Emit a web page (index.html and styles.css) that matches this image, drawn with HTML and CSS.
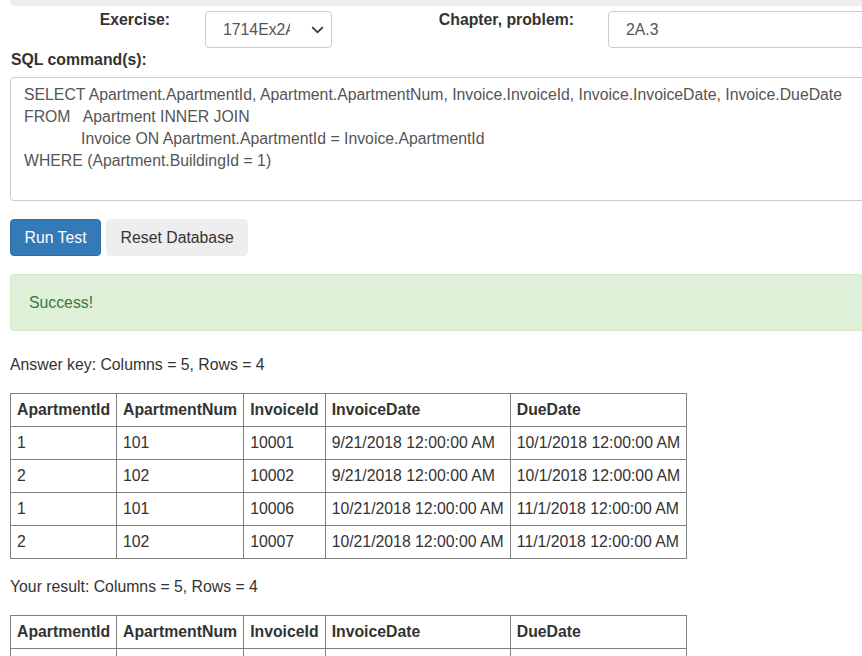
FILE: index.html
```html
<!DOCTYPE html>
<html>
<head>
<meta charset="utf-8">
<title>SQL Test</title>
<link rel="stylesheet" href="styles.css">
</head>
<body>
<div class="page">
  <div class="topbar"></div>
  <div class="exercise-row">
    <label class="lbl lbl-ex">Exercise:</label>
    <div class="select">
      <span class="select-text">1714Ex2A3</span>
      <svg class="chev" width="13" height="8" viewBox="0 0 13 8"><path d="M1.2 1.2 L6.5 6.4 L11.8 1.2" fill="none" stroke="#333" stroke-width="1.7"/></svg>
    </div>
    <label class="lbl lbl-ch">Chapter, problem:</label>
    <div class="input">2A.3</div>
  </div>
  <label class="lbl lbl-sql">SQL command(s):</label>
  <textarea class="sql" spellcheck="false">SELECT Apartment.ApartmentId, Apartment.ApartmentNum, Invoice.InvoiceId, Invoice.InvoiceDate, Invoice.DueDate
FROM   Apartment INNER JOIN
             Invoice ON Apartment.ApartmentId = Invoice.ApartmentId
WHERE (Apartment.BuildingId = 1)</textarea>
  <div class="buttons">
    <button class="btn btn-primary">Run Test</button>
    <button class="btn btn-default">Reset Database</button>
  </div>
  <div class="alert">Success!</div>
  <p class="caption first">Answer key: Columns = 5, Rows = 4</p>
  <table class="grid">
    <tr><th>ApartmentId</th><th>ApartmentNum</th><th>InvoiceId</th><th>InvoiceDate</th><th>DueDate</th></tr>
    <tr><td>1</td><td>101</td><td>10001</td><td>9/21/2018 12:00:00 AM</td><td>10/1/2018 12:00:00 AM</td></tr>
    <tr><td>2</td><td>102</td><td>10002</td><td>9/21/2018 12:00:00 AM</td><td>10/1/2018 12:00:00 AM</td></tr>
    <tr><td>1</td><td>101</td><td>10006</td><td>10/21/2018 12:00:00 AM</td><td>11/1/2018 12:00:00 AM</td></tr>
    <tr><td>2</td><td>102</td><td>10007</td><td>10/21/2018 12:00:00 AM</td><td>11/1/2018 12:00:00 AM</td></tr>
  </table>
  <p class="caption second">Your result: Columns = 5, Rows = 4</p>
  <table class="grid">
    <tr><th>ApartmentId</th><th>ApartmentNum</th><th>InvoiceId</th><th>InvoiceDate</th><th>DueDate</th></tr>
    <tr><td>1</td><td>101</td><td>10001</td><td>9/21/2018 12:00:00 AM</td><td>10/1/2018 12:00:00 AM</td></tr>
    <tr><td>2</td><td>102</td><td>10002</td><td>9/21/2018 12:00:00 AM</td><td>10/1/2018 12:00:00 AM</td></tr>
    <tr><td>1</td><td>101</td><td>10006</td><td>10/21/2018 12:00:00 AM</td><td>11/1/2018 12:00:00 AM</td></tr>
    <tr><td>2</td><td>102</td><td>10007</td><td>10/21/2018 12:00:00 AM</td><td>11/1/2018 12:00:00 AM</td></tr>
  </table>
</div>
</body>
</html>
```
FILE: styles.css
```css
html, body {
  margin: 0;
  padding: 0;
  overflow: hidden;
  background: #fff;
}
body {
  font-family: "Liberation Sans", Arial, sans-serif;
  font-size: 15.8px;
  color: #333;
  line-height: 23px;
}
.page {
  width: 890px;
  padding-left: 10px;
  box-sizing: border-box;
}
.topbar {
  height: 6px;
  background: #eee;
  border-radius: 0 0 6px 6px;
}
.exercise-row {
  display: flex;
  align-items: flex-start;
  margin-top: 2px;
}
.exercise-row > * {
  flex-shrink: 0;
}
.lbl {
  font-weight: bold;
  display: block;
}
.lbl-ex {
  width: 160px;
  text-align: right;
  margin-right: 35px;
}
.select {
  margin-top: 3px;
  width: 127px;
  height: 37px;
  box-sizing: border-box;
  border: 1px solid #ccc;
  border-radius: 4px;
  display: flex;
  align-items: center;
  padding: 0 6px 0 17px;
  color: #555;
}
.select-text {
  width: 67px;
  overflow: hidden;
  white-space: nowrap;
}
.chev {
  margin-left: auto;
  margin-right: 1px;
  margin-top: 1px;
}
.lbl-ch {
  width: 242px;
  text-align: right;
  margin-right: 34px;
}
.input {
  margin-top: 3px;
  width: 270px;
  height: 37px;
  box-sizing: border-box;
  border: 1px solid #ccc;
  border-radius: 4px;
  padding: 6px 17px;
  color: #555;
}
.lbl-sql {
  margin-left: 1px;
}
.sql {
  display: block;
  margin-top: 6px;
  width: 100%;
  height: 124px;
  box-sizing: border-box;
  border: 1px solid #ccc;
  border-radius: 4px;
  padding: 6px 13px;
  font-family: "Liberation Sans", Arial, sans-serif;
  font-size: 15.8px;
  line-height: 22px;
  color: #555;
  resize: none;
  overflow: hidden;
  white-space: pre;
  outline: none;
}
.buttons {
  display: flex;
  gap: 5px;
  margin-top: 18px;
}
.btn {
  font-family: "Liberation Sans", Arial, sans-serif;
  font-size: 15.8px;
  line-height: 23px;
  height: 37px;
  box-sizing: border-box;
  padding: 6px 13.5px;
  border-radius: 4px;
  border: 1px solid transparent;
  cursor: pointer;
}
.btn-primary {
  background: #337ab7;
  border-color: #2e6da4;
  color: #fff;
}
.btn-default {
  background: #eee;
  border-color: #eee;
  color: #333;
}
.alert {
  margin-top: 18px;
  height: 57px;
  box-sizing: border-box;
  padding: 16px 18px;
  background: #dff0d8;
  border: 1px solid #d6e9c6;
  border-radius: 4px;
  color: #3c763d;
}
.caption {
  margin: 0;
  line-height: 22px;
}
.caption.first {
  margin-top: 23px;
  margin-bottom: 17px;
}
.caption.second {
  margin-top: 17px;
  margin-bottom: 17px;
}
.grid {
  border-collapse: collapse;
  border: 1px solid #808080;
}
.grid th,
.grid td {
  border: 1px solid #808080;
  padding: 5px 6px;
  line-height: 22px;
  text-align: left;
  white-space: nowrap;
}
.grid th {
  font-weight: bold;
}
```
